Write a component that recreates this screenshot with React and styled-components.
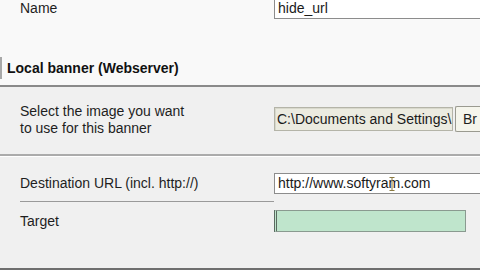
import React from 'react';
import styled, { createGlobalStyle } from 'styled-components';

const Global = createGlobalStyle`
  html, body {
    margin: 0;
    padding: 0;
    background: #f0f0f0;
    overflow: hidden;
  }
  body {
    font-family: "Liberation Sans", Arial, sans-serif;
    font-size: 14px;
    color: #1e1e1e;
  }
`;

const Page = styled.div`
  width: 480px;
  height: 270px;
  overflow: hidden;
  position: relative;
`;

const TopPart = styled.div`
  background: #f9f9f9;
  margin-top: -3px;
  border-bottom: 2px solid #8a8a8a;
`;

const Row = styled.div`
  display: flex;
  align-items: flex-start;
  height: ${p => p.$h}px;
`;

const Label = styled.div`
  width: 254px;
  margin-left: 20px;
  box-sizing: border-box;
  padding-top: ${p => p.$pt || 0}px;
  line-height: ${p => p.$lh || 17}px;
  height: ${p => (p.$cellH ? p.$cellH + 'px' : 'auto')};
  border-bottom: ${p => (p.$line ? '1px solid #9a9a9a' : 'none')};
  flex-shrink: 0;
`;

const Field = styled.div`
  box-sizing: border-box;
  margin-top: ${p => p.$mt || 0}px;
  width: ${p => p.$w}px;
  height: ${p => p.$h}px;
  line-height: ${p => p.$h - 2}px;
  padding-left: 3px;
  background: ${p => p.$bg || '#ffffff'};
  border: 1px solid #8c8c8c;
  border-top-color: ${p => p.$noTop ? 'transparent' : '#8c8c8c'};
  border-right: ${p => (p.$open ? 'none' : '1px solid #8c8c8c')};
  white-space: nowrap;
  overflow: hidden;
  flex-shrink: 0;
  position: relative;
  color: #1a1a1a;
`;

const FileBox = styled(Field)`
  border: 1px solid #b4b4a8;
  box-shadow: inset 1px 1px 0 #d8d8cc;
  padding-left: 2px;
`;

const GreenBox = styled(Field)`
  border: 1px solid #8a9a90;
  border-left: 3px double #5a6a60;
`;

const BrowseBtn = styled.div`
  box-sizing: border-box;
  margin-top: 19px;
  margin-left: 2px;
  width: 25px;
  height: 26px;
  line-height: 24px;
  padding-left: 7px;
  background: #f5f5ec;
  border: 1px solid #9a9a90;
  border-right: none;
  border-radius: 2px 0 0 2px;
  white-space: nowrap;
  overflow: hidden;
  flex-shrink: 0;
`;

const Heading = styled.div`
  margin-top: 38px;
  height: 22px;
  line-height: 22px;
  padding-left: 5px;
  font-weight: bold;
  color: #111;
  border-left: 2px solid #a8a8a8;
  margin-bottom: 6px;
`;

const Separator = styled.div`
  height: 2px;
  background: #ababab;
  border-bottom: 1px solid #ffffff;
`;

const Bottom = styled.div`
  height: 2px;
  background: #6e6e6e;
`;

const Cursor = styled.svg`
  position: absolute;
  left: 114px;
  top: 3px;
`;

export default function App() {
  return (
    <Page>
      <Global />
      <TopPart>
        <Row $h={22}>
          <Label $pt={3}>Name</Label>
          <Field $w={206} $h={22} $noTop $open>hide_url</Field>
        </Row>
        <Heading>Local banner (Webserver)</Heading>
      </TopPart>

      <Row $h={67}>
        <Label $pt={16}>
          Select the image you want<br />to use for this banner
        </Label>
        <FileBox $mt={20} $w={179} $h={24} $bg="#ebebe0">
          C:\Documents and Settings\
        </FileBox>
        <BrowseBtn>Br</BrowseBtn>
      </Row>
      <Separator />

      <Row $h={45}>
        <Label $pt={18} $cellH={45} $line>Destination URL (incl. http://)</Label>
        <Field $mt={16} $w={206} $h={21} $open>
          http://www.softyram.com
          <Cursor width="6" height="14" viewBox="0 0 6 14">
            <path d="M0.5 0.5h5M3 0.5v13M0.5 13.5h5" stroke="#8a7a40" strokeWidth="1" fill="none" />
          </Cursor>
        </Field>
      </Row>

      <Row $h={66}>
        <Label $pt={11}>Target</Label>
        <GreenBox $mt={8} $w={192} $h={22} $bg="#bfe5cc" />
      </Row>
      <Bottom />
    </Page>
  );
}
